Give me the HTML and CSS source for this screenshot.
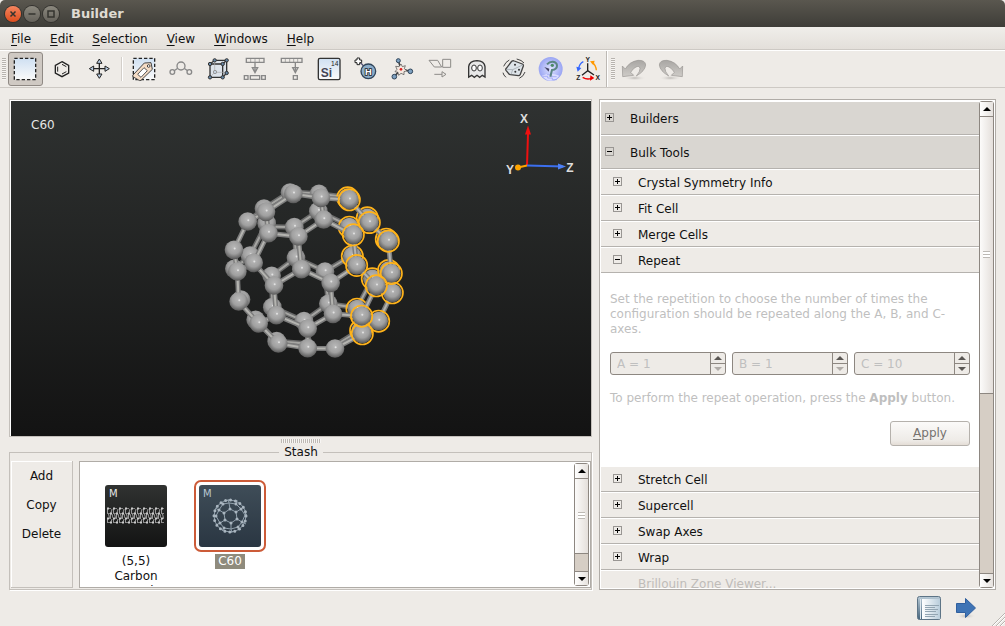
FILE: index.html
```html
<!DOCTYPE html>
<html lang="en">
  <head>
    <title>Builder</title>
    <meta charset="utf-8">
    <link rel="stylesheet" href="styles.css">
  </head>
  <body>
    <header class="titlebar">
      <button class="winbtn close" aria-label="Close"><svg viewBox="0 0 16 16"><path d="M5.500 5.500l5 5M10.500 5.500l-5 5"/></svg></button>
      <button class="winbtn" aria-label="Minimize"><svg viewBox="0 0 16 16"><path d="M4.500 8h7"/></svg></button>
      <button class="winbtn" aria-label="Maximize"><svg viewBox="0 0 16 16"><path d="M5 5h6v6h-6z"/></svg></button>
      <h1>Builder</h1>
    </header>

    <nav class="menubar">
      <button><u>F</u>ile</button>
      <button><u>E</u>dit</button>
      <button><u>S</u>election</button>
      <button><u>V</u>iew</button>
      <button><u>W</u>indows</button>
      <button><u>H</u>elp</button>
    </nav>

    <div class="toolbar">
      <span class="grip"></span>
      <button class="tool active" aria-label="Select">
        <svg viewBox="0 0 84 84"><rect x="10" y="10" width="64" height="64" fill="url(#sky)" stroke="#222" stroke-width="4" stroke-dasharray="10 6"/></svg>
      </button>
      <button class="tool" aria-label="Ring">
        <svg viewBox="0 0 84 84"><path d="M42 20l20 11v23l-20 11-20-11v-23z" fill="none" stroke="#222" stroke-width="4"/><path d="M29 35v15M42 28l13 7M42 57l13-7" stroke="#222" stroke-width="3"/></svg>
      </button>
      <button class="tool" aria-label="Move">
        <svg viewBox="0 0 84 84"><path d="M43 20v42M22 41h42" stroke="#222" stroke-width="4"/><path d="M43 12l8 13h-16zM43 70l8-13h-16zM13 41l13-8v16zM73 41l-13-8v16z" fill="#bcd0e6" stroke="#222" stroke-width="3"/></svg>
      </button>
      <span class="sep"></span>
      <button class="tool" aria-label="Tag selection">
        <svg viewBox="0 0 84 84"><rect x="10" y="10" width="64" height="64" fill="url(#sky)" stroke="#222" stroke-width="4" stroke-dasharray="10 6"/><path d="M9 60l34-36 20-1 4 20-34 33q-4 2-7-1l-16-9q-4-3-1-6z" fill="#f5dcc5" stroke="#444" stroke-width="3"/><path d="M23 58l19-20 10 9-19 20z" fill="#fff" stroke="#555" stroke-width="3"/><circle cx="56" cy="33" r="4" fill="#fff" stroke="#444" stroke-width="3"/></svg>
      </button>
      <button class="tool" aria-label="Bonds">
        <svg viewBox="0 0 84 84" fill="#eeebe7" stroke="#888" stroke-width="4"><path d="M16 51l26-18 25 18"/><circle cx="16" cy="51" r="7"/><circle cx="42" cy="33" r="12"/><circle cx="67" cy="51" r="7"/></svg>
      </button>
      <button class="tool" aria-label="Unit cell">
        <svg viewBox="0 0 84 84" stroke="#333" stroke-width="4"><path d="M18 27L32 16H68V54L56 67H18z" fill="#dde3ea"/><path d="M18 27H56V67M56 27L68 16" fill="none"/><path d="M32 20V52L18 67M32 52H68" fill="none" stroke="#aaa" stroke-width="2"/><g fill="#6688a8" stroke-width="3"><circle cx="18" cy="27" r="5"/><circle cx="56" cy="27" r="5"/><circle cx="56" cy="67" r="5"/><circle cx="18" cy="67" r="5"/><circle cx="32" cy="16" r="5"/><circle cx="68" cy="16" r="5"/><circle cx="68" cy="54" r="5"/></g><circle cx="33" cy="51" r="5" fill="#c5d2df" stroke="#999" stroke-width="3"/></svg>
      </button>
      <button class="tool" aria-label="Split">
        <svg viewBox="0 0 84 84" fill="none" stroke="#888" stroke-width="4"><path d="M16 10h53v12h-53zM42 22v25M34 38h16l-8 15zM10 62h11v11h-11zM28 62h28v11h-28zM62 62h11v11h-11z"/><path d="M29 10v12M42 10v12M55 10v12" stroke-width="2"/></svg>
      </button>
      <button class="tool" aria-label="Extract">
        <svg viewBox="0 0 84 84" fill="none" stroke="#888" stroke-width="4"><path d="M10 10h62v12h-62zM52 22v25M44 38h16l-8 15zM46 62h12v11h-12z"/><path d="M22 10v12M35 10v12M47 10v12M59 10v12" stroke-width="2"/></svg>
      </button>
      <button class="tool" aria-label="Element">
        <svg viewBox="0 0 84 84"><rect x="10" y="10" width="65" height="64" rx="5" fill="url(#sky)" stroke="#333" stroke-width="4"/><text x="17" y="65" class="si">Si</text><text x="48" y="32" class="num">14</text></svg>
      </button>
      <button class="tool" aria-label="Add hydrogen">
        <svg viewBox="0 0 84 84"><path d="M24 22l14 14" stroke="#557" stroke-width="4"/><path d="M15 9h8v6h6v8h-6v6h-8v-6h-6v-8h6z" fill="#fff" stroke="#222" stroke-width="3"/><circle cx="49" cy="49" r="22" fill="#8bacc9" stroke="#2f4459" stroke-width="4"/><text x="49" y="59" class="hyd">H</text></svg>
      </button>
      <button class="tool" aria-label="Adjust">
        <svg viewBox="0 0 84 84"><path d="M36 42L28 17M36 42L16 65M36 42L64 49" stroke="#444" stroke-width="5"/><path d="M36 27l4 8 9-3-3 9 8 6-9 3v9l-9-4-7 6-2-9-9-2 6-7-4-9 10 1z" fill="#f5e9e0" stroke="#444" stroke-width="2"/><circle cx="36" cy="43" r="4" fill="#d22"/><g fill="#7da0c0" stroke="#2f4459" stroke-width="3"><circle cx="28" cy="17" r="6"/><circle cx="16" cy="65" r="7"/><circle cx="64" cy="49" r="7"/></g></svg>
      </button>
      <button class="tool" aria-label="Transform cell">
        <svg viewBox="0 0 84 84" fill="none" stroke="#8d8b88" stroke-width="3"><path d="M9 16h26l12 20h-22zM50 13h24v24h-24zM25 58h23M48 50l12 8-12 8z"/></svg>
      </button>
      <button class="tool" aria-label="Ghost">
        <svg viewBox="0 0 84 84"><path d="M17 66V35q2-17 25-18 22 1 24 18v31l-8-5-8 6-8-6-8 6-8-6z" fill="#e8e8e8" stroke="#333" stroke-width="4"/><g fill="#fff" stroke="#333" stroke-width="3"><ellipse cx="33" cy="39" rx="7" ry="9"/><ellipse cx="51" cy="39" rx="7" ry="9"/></g></svg>
      </button>
      <button class="tool" aria-label="Randomize">
        <svg viewBox="0 0 84 84" fill="none" stroke="#444" stroke-width="3"><path d="M35 19q4-3 8-1l24 9q4 2 3 6l-9 25q-2 4-6 4l-24-3q-3 0-5-3l-8-10q-2-3 1-6z" fill="#dde3e8" stroke-width="4"/><path d="M38 44l-18-1M38 44l30-14M38 44l-5 15" stroke="#99a0a6" stroke-width="2"/><path d="M11 34q5-13 17-19M18 67q-8-7-9-14M50 12q15 3 22 12M75 51q-4 13-17 19"/><g fill="#333" stroke="none"><circle cx="46" cy="50" r="3"/><circle cx="57" cy="44" r="3"/><circle cx="45" cy="29" r="3"/></g></svg>
      </button>
      <button class="tool" aria-label="Render">
        <svg viewBox="0 0 84 84"><circle cx="41" cy="42" r="36" fill="url(#orb)"/><path d="M15 62q25-12 52 0-12 15-26 15t-26-15z" fill="#dcdeff"/><path d="M18 64h14v5h14v5h14M30 59h14v6h15" stroke="#8f99f2" stroke-width="2" fill="none"/><path d="M30 28q8-9 18-8 12 2 12 12 0 11-15 13l-5 20" fill="none" stroke="#5b8583" stroke-width="6"/><circle cx="46" cy="31" r="5" fill="#4c8a66"/><path d="M22 36l15 5-2 9z" fill="#446"/></svg>
      </button>
      <button class="tool" aria-label="Rotate axes">
        <svg viewBox="0 0 84 84" fill="none"><path d="M41 25v22M41 47L24 61M41 47l19 13" stroke="#222" stroke-width="4"/><path d="M28 20q-12 6-14 21" stroke="#36f" stroke-width="4"/><path d="M7 35l4 15 11-11z" fill="#36f"/><path d="M54 22q12 8 13 24" stroke="#f90" stroke-width="4"/><path d="M48 19l14-2-4 14z" fill="#f90"/><path d="M26 67q13 8 26 3" stroke="#e00" stroke-width="4"/><path d="M49 61l12 8-13 8z" fill="#e00"/><g class="axl"><text x="41" y="20">Y</text><text x="13" y="76">Z</text><text x="71" y="76">X</text></g></svg>
      </button>
      <span class="sep full"></span>
      <span class="grip"></span>
      <button class="tool" aria-label="Undo" disabled>
        <svg viewBox="0 0 84 84"><use href="#turn"/></svg>
      </button>
      <button class="tool" aria-label="Redo" disabled>
        <svg viewBox="0 0 84 84"><use href="#turn" transform="matrix(-1 0 0 1 84 0)"/></svg>
      </button>
    </div>

    <main class="main">
      <div class="left">
        <div class="viewport">
          <svg viewBox="0 0 580 334" role="img" aria-label="C60 molecule">
            <defs>
              <linearGradient id="sky" x2="0" y2="1"><stop offset="0" stop-color="#cfe0f2"/><stop offset="1" stop-color="#fafafa"/></linearGradient>
              <radialGradient id="orb"><stop offset="0" stop-color="#dfe3ff"/><stop offset="1" stop-color="#9aa5f3"/></radialGradient>
              <radialGradient id="ball" cx=".5" cy=".38" r=".62"><stop offset="0" stop-color="#b8b8b8"/><stop offset=".55" stop-color="#a0a0a0"/><stop offset="1" stop-color="#585858"/></radialGradient>
              <linearGradient id="turnfill" x2="0" y2="1"><stop offset="0" stop-color="#a8a6a3"/><stop offset="1" stop-color="#cfccc8"/></linearGradient>
              <radialGradient id="shade"><stop offset="0" stop-color="#bbb8b4"/><stop offset="1" stop-color="#eeebe7" stop-opacity="0"/></radialGradient>
              <g id="turn">
                <ellipse cx="44" cy="69" rx="34" ry="8" fill="url(#shade)"/>
                <path d="M7 33l9 9q12-22 38-26 22-1 23 14-2 18-28 33 12-14 11-23-2-9-12-4-9 4-16 16l9 9-33 4z" fill="url(#turnfill)" stroke="#999693" stroke-width="2"/>
              </g>
              <g id="atom">
                <circle r="28" fill="url(#ball)"/>
                <circle cx="2" cy="-4" r="3" fill="#e2e2e2"/>
              </g>
              <g id="sel">
                <circle r="32" fill="none" stroke="#ffb31a" stroke-width="5"/>
                <use href="#atom"/>
              </g>
              <path id="backbonds" d="M147 114L225 64L312 70L398 80M155 168L238 170L310 122L403 166L410 255M155 158L105 255L58 295M238 170L243 262L170 316L172 410L267 452L340 400L330 303L243 262M330 303L410 255M340 400L426 412L472 325L521 295M426 412L433 480L360 525M267 452L285 520L185 512L120 445M310 122L312 70M98 153L147 114"/>
              <path id="frontbonds" d="M98 153L153 124L235 70L318 82L403 88L463 156L520 212L529 309L532 367L491 452L442 490L360 534L278 533L190 519L131 459L71 393L67 303L57 238L98 153M153 124L160 188L116 277L67 303M160 188L250 198L326 147L318 82M326 147L415 193L463 156M415 193L425 285L484 346L529 309M425 285L347 337L259 296L250 198M259 296L177 345L116 277M177 345L184 434L131 459M184 434L278 474L354 430L347 337M354 430L440 437L484 346M440 437L442 490M278 474L278 533"/>
            </defs>

            <text x="20" y="27" class="label">C60</text>

            <!-- C60 cage, back half first -->
            <g transform="translate(204 69) scale(.3333)">
              <use href="#backbonds" class="bond dim"/>
              <use href="#backbonds" class="bond-hi dim"/>
              <use href="#atom" x="225" y="66"/><use href="#atom" x="312" y="70"/><use href="#atom" x="147" y="114"/>
              <use href="#atom" x="155" y="158"/><use href="#atom" x="238" y="170"/><use href="#atom" x="310" y="122"/>
              <use href="#atom" x="105" y="255"/><use href="#atom" x="58" y="295"/><use href="#atom" x="170" y="316"/>
              <use href="#atom" x="243" y="262"/><use href="#atom" x="330" y="303"/><use href="#atom" x="172" y="410"/>
              <use href="#atom" x="267" y="452"/><use href="#atom" x="340" y="400"/><use href="#atom" x="122" y="448"/>
              <use href="#atom" x="185" y="512"/><use href="#atom" x="78" y="387"/>
              <use href="#sel" x="398" y="82"/><use href="#sel" x="403" y="170"/><use href="#sel" x="457" y="142"/>
              <use href="#sel" x="514" y="206"/><use href="#sel" x="412" y="257"/><use href="#sel" x="472" y="325"/>
              <use href="#sel" x="521" y="300"/><use href="#sel" x="426" y="416"/><use href="#sel" x="437" y="480"/>
              <use href="#frontbonds" class="bond"/>
              <use href="#frontbonds" class="bond-hi"/>
              <use href="#atom" x="235" y="70"/><use href="#atom" x="318" y="82"/><use href="#atom" x="153" y="124"/>
              <use href="#atom" x="98" y="153"/><use href="#atom" x="160" y="188"/><use href="#atom" x="250" y="198"/>
              <use href="#atom" x="326" y="147"/><use href="#atom" x="57" y="238"/><use href="#atom" x="67" y="303"/>
              <use href="#atom" x="116" y="277"/><use href="#atom" x="177" y="345"/><use href="#atom" x="259" y="296"/>
              <use href="#atom" x="347" y="337"/><use href="#atom" x="71" y="393"/><use href="#atom" x="131" y="459"/>
              <use href="#atom" x="184" y="434"/><use href="#atom" x="278" y="533"/><use href="#atom" x="278" y="474"/>
              <use href="#atom" x="354" y="430"/><use href="#atom" x="190" y="519"/><use href="#atom" x="360" y="534"/>
              <use href="#sel" x="403" y="88"/><use href="#sel" x="463" y="156"/><use href="#sel" x="415" y="193"/>
              <use href="#sel" x="520" y="212"/><use href="#sel" x="425" y="285"/><use href="#sel" x="532" y="367"/>
              <use href="#sel" x="529" y="309"/><use href="#sel" x="484" y="346"/><use href="#sel" x="491" y="452"/>
              <use href="#sel" x="442" y="490"/><use href="#sel" x="440" y="437"/>
            </g>

            <!-- axes -->
            <g fill="none" stroke-width="2">
              <path d="M516 64l1-32" stroke="#f01010"/>
              <path d="M516 64l36 1" stroke="#3c6fee"/>
              <path d="M516 64l-9 2" stroke="#ffa500"/>
            </g>
            <path d="M517 24l3 9h-6z" fill="#f01010"/>
            <path d="M555 65l-8-3v6z" fill="#4c7ff4"/>
            <circle cx="507" cy="66" r="3" fill="#ffa500"/>
            <g class="axis"><text x="513" y="21">X</text><text x="499" y="72">Y</text><text x="559" y="70">Z</text></g>
          </svg>
        </div>
        <div class="splitter"></div>
        <fieldset class="stash">
          <legend>Stash</legend>
          <div class="stash-body">
            <div class="actions">
              <button>Add</button>
              <button>Copy</button>
              <button>Delete</button>
            </div>
            <div class="list">
              <div class="items">
                <figure class="item">
                  <div class="thumb">
                    <svg viewBox="0 0 62 62">
                      <defs>
                        <pattern id="tube" x="2" y="22" width="6" height="17" patternUnits="userSpaceOnUse">
                          <path d="M0 1.500h6M0 6.500h6M0 11.500h6M0 15.500h6" fill="none" stroke="#888" stroke-dasharray="4 2"/>
                          <path d="M.5 1.500v5M3.500 6.500v5M.5 11.500v4M5 2l-1 4M1.500 7l1 4M5 7l1 4M5 12l-1 3" fill="none" stroke="#999"/>
                          <path d="M0 1.500h2M3 6.500h2M0 11.500h2M3 15.500h2" stroke="#ccc" stroke-width="2"/>
                        </pattern>
                      </defs>
                      <rect x="2" y="22" width="57" height="17" fill="url(#tube)"/>
                      <text x="4" y="12">M</text>
                    </svg>
                  </div>
                  <figcaption>(5,5)<br>Carbon<br>Nanotube</figcaption>
                </figure>
                <figure class="item selected">
                  <div class="thumb">
                    <svg viewBox="0 0 62 62">
                      <g fill="none" stroke="#91a0ac">
                        <path d="M31 24l6 3 1 7-6 4-6-3-1-7zM31 24l-1-6M37 27l5-3M38 34l5 3M32 38v6M26 35l-5 3M25 28l-5-3"/>
                        <path d="M30 18l-6 1-4 6-3 6 4 7 4 5 7 1 7-2 4-5 3-7-4-6-5-5z"/>
                        <path d="M30 18l-1-4M24 19l-3-2M20 25l-4-2M17 31h-3M21 38l-4 2M25 43l-2 3M32 44l1 4M39 42l3 3M43 37l4 2M46 30l2-1M42 24l3-3M37 19l1-4"/>
                        <circle cx="31" cy="31" r="16"/>
                      </g>
                      <g fill="none" stroke="#a9b5bf" stroke-width="3" stroke-linecap="round">
                        <circle cx="31" cy="31" r="16" stroke-dasharray="0 5.030"/>
                        <path d="M31 24h0M37 27h0M38 34h0M32 38h0M26 35h0M25 28h0M24 19h0M20 25h0M17 31h0M21 38h0M25 43h0M39 42h0M43 37h0M42 24h0M37 19h0"/>
                      </g>
                      <text x="4" y="12">M</text>
                    </svg>
                  </div>
                  <figcaption><span>C60</span></figcaption>
                </figure>
              </div>
              <div class="scroll">
                <button class="up" aria-label="Scroll up"></button>
                <span class="knob short"></span>
                <span class="trough short"></span>
                <button class="down" aria-label="Scroll down"></button>
              </div>
            </div>
          </div>
        </fieldset>
      </div>

      <aside class="panel">
        <div class="tree">
          <button class="row top"><i class="box plus"></i>Builders</button>
          <button class="row top"><i class="box"></i>Bulk Tools</button>
          <button class="row"><i class="box plus"></i>Crystal Symmetry Info</button>
          <button class="row"><i class="box plus"></i>Fit Cell</button>
          <button class="row"><i class="box plus"></i>Merge Cells</button>
          <button class="row"><i class="box"></i>Repeat</button>
          <form class="repeat">
            <p>Set the repetition to choose the number of times the configuration should be repeated along the A, B, and C-axes.</p>
            <div class="spins">
              <div class="spin">
                <input type="text" value="A = 1" aria-label="A" disabled>
                <div class="steps"><button type="button" class="inc" aria-label="Increase A"></button><button type="button" class="dec off" aria-label="Decrease A"></button></div>
              </div>
              <div class="spin">
                <input type="text" value="B = 1" aria-label="B" disabled>
                <div class="steps"><button type="button" class="inc" aria-label="Increase B"></button><button type="button" class="dec off" aria-label="Decrease B"></button></div>
              </div>
              <div class="spin">
                <input type="text" value="C = 10" aria-label="C" disabled>
                <div class="steps"><button type="button" class="inc" aria-label="Increase C"></button><button type="button" class="dec" aria-label="Decrease C"></button></div>
              </div>
            </div>
            <p>To perform the repeat operation, press the <b>Apply</b> button.</p>
            <button type="button" class="apply"><u>A</u>pply</button>
          </form>
          <button class="row"><i class="box plus"></i>Stretch Cell</button>
          <button class="row"><i class="box plus"></i>Supercell</button>
          <button class="row"><i class="box plus"></i>Swap Axes</button>
          <button class="row"><i class="box plus"></i>Wrap</button>
          <button class="row" disabled><i class="box none"></i>Brillouin Zone Viewer...</button>
        </div>
        <div class="scroll">
          <button class="up" aria-label="Scroll up"></button>
          <span class="knob"></span>
          <span class="trough"></span>
          <button class="down" aria-label="Scroll down"></button>
        </div>
      </aside>
    </main>

    <footer class="statusbar">
      <button aria-label="Log">
        <svg viewBox="0 0 24 24"><defs><linearGradient id="page" x2="0" y2="1"><stop offset="0" stop-color="#b9cad6"/><stop offset="1" stop-color="#45647c"/></linearGradient><linearGradient id="sheet"><stop offset="0" stop-color="#fff"/><stop offset="1" stop-color="#b9cddb"/></linearGradient></defs><rect x=".5" y=".5" width="23" height="23" rx="2" fill="url(#page)" stroke="#5d7486"/><path d="M3.500 3v20" stroke="#dde6ec"/><path d="M5 3h18v20h-18z" fill="url(#sheet)"/><path d="M8 9.500h14M8 11.500h10M8 13.500h13M8 15.500h11M8 18.500h13M8 20.500h10" stroke="#93a5b2"/></svg>
      </button>
      <button aria-label="Next">
        <svg viewBox="0 0 24 24"><ellipse cx="12" cy="20" rx="10" ry="3" fill="url(#shade)"/><path d="M2.500 7.500h9v-5l10 9.500-10 9.500v-5h-9z" fill="#3f74b5" stroke="#2f5f9e"/></svg>
      </button>
      <svg class="corner" viewBox="0 0 14 14"><path d="M1 14L14 1M5 14l9-9M9 14l5-5" stroke="#b8b4af"/><path d="M2 14L14 2M6 14l8-8M10 14l4-4" stroke="#fff"/></svg>
    </footer>
  </body>
</html>
```
FILE: styles.css
```css
* {
  box-sizing: border-box;
}
body {
  margin: 0;
  height: 100vh;
  display: flex;
  flex-direction: column;
  overflow: hidden;
  background: #eeebe7;
  color: #111;
  font: 12px/15px "DejaVu Sans", sans-serif;
}
button, input {
  font: inherit;
  color: inherit;
  margin: 0;
  padding: 0;
  border: 0;
  background: none;
}
svg {
  display: block;
}
u {
  text-underline-offset: 2px;
}

/* window title and menus */
.titlebar {
  height: 27px;
  flex: none;
  display: flex;
  align-items: center;
  gap: 3px;
  padding-left: 5px;
  background: linear-gradient(#5a574f, #3e3d38);
  border-radius: 5px 5px 0 0;
}
.titlebar h1 {
  margin: 0 0 0 9px;
  font-size: 13px;
  color: #dfdbd2;
}
.winbtn {
  width: 16px;
  height: 16px;
  border-radius: 50%;
  background: linear-gradient(#8b887e, #65625b);
  box-shadow: 0 0 0 1px #33322e;
}
.winbtn.close {
  background: linear-gradient(#f5855f, #df4d1d);
}
.winbtn path {
  fill: none;
  stroke: #35342f;
  stroke-width: 1.5;
}
.menubar {
  height: 23px;
  flex: none;
  display: flex;
  align-items: center;
  background: linear-gradient(#f0eeea, #e3dfda);
  border-bottom: 1px solid #cdc9c4;
  padding: 3px 0 0 1px;
}
.menubar button {
  padding: 0 9px 0 10px;
}

/* toolbar */
.toolbar {
  height: 38px;
  flex: none;
  display: flex;
  align-items: center;
  gap: 2px;
  padding-left: 2px;
  border-top: 1px solid #fff;
  border-bottom: 1px solid #cdc9c4;
}
.grip {
  width: 4px;
  height: 22px;
  background: repeating-linear-gradient(#b7b3ae 0 1px, #f7f5f3 1px 2px);
}
.tool {
  width: 35px;
  height: 34px;
  padding: 3px;
  border: 1px solid transparent;
  border-radius: 3px;
}
.tool svg {
  width: 28px;
  height: 28px;
  margin: -1px;
}
.tool.active {
  background: #cfc9c3;
  border-color: #8f8984;
}
.sep {
  width: 2px;
  height: 24px;
  margin: 0 2px;
  border-left: 1px solid #d3cfca;
  border-right: 1px solid #fff;
}
.sep.full {
  height: 36px;
  margin: 0 1px 0 -2px;
  border-left-color: #bdb9b4;
}
.tool text {
  font-family: "Liberation Sans", sans-serif;
  font-weight: bold;
  fill: #222;
}
.tool .si {
  font-size: 36px;
  fill: #445;
}
.tool .num {
  font-size: 20px;
  font-weight: normal;
}
.tool .hyd {
  font-size: 28px;
  fill: #fff;
  stroke: #222;
  stroke-width: 5;
  paint-order: stroke;
  text-anchor: middle;
}
.tool .axl {
  font-size: 20px;
  text-anchor: middle;
}

/* work area */
.main {
  flex: 1;
  min-height: 0;
  display: grid;
  grid-template-columns: 583fr 397fr;
  grid-template-rows: 100%;
  gap: 7px;
  padding: 11px 9px 0;
}
.left {
  display: flex;
  flex-direction: column;
  min-width: 0;
}
.viewport {
  flex: 1;
  min-height: 0;
  padding: 1px 0 0 1px;
  border: 1px solid #c4c0bb;
  background: #fff;
}
.viewport svg {
  width: 100%;
  height: 100%;
  background: linear-gradient(#2f3231, #131313);
}
.label {
  fill: #e6e6e6;
}
.axis {
  font: bold 12px "Liberation Sans", sans-serif;
  fill: #ddd;
  text-anchor: middle;
}
.bond {
  fill: none;
  stroke: #7d7d7d;
  stroke-width: 15;
}
.bond-hi {
  fill: none;
  stroke: #b4b4b0;
  stroke-width: 6;
}
.dim {
  opacity: .8;
}
.splitter {
  height: 7px;
  flex: none;
  width: 40px;
  margin: 0 auto;
  border-top: 2px solid #eeebe7;
  border-bottom: 1px solid #eeebe7;
  background: repeating-linear-gradient(90deg, #bdb9b4 0 1px, #f7f5f3 1px 2px);
}

/* stash */
.stash {
  flex: none;
  margin: 0;
  min-width: 0;
  padding: 1px 0 1px 1px;
  border: 1px solid #c4c0bb;
  box-shadow: 1px 1px #fff;
}
.stash legend {
  margin: 0 auto;
  padding: 1px 5px 0;
}
.stash-body {
  height: 127px;
  display: flex;
  gap: 6px;
}
.actions {
  width: 62px;
  display: flex;
  flex-direction: column;
  align-items: center;
  gap: 14px;
  padding-top: 8px;
  border: 1px solid #c4c0bb;
  border-width: 0 1px 1px 0;
  box-shadow: inset 1px 1px #fff;
}
.list {
  flex: 1;
  min-width: 0;
  display: flex;
  padding: 1px;
  background: #fff;
  border: 1px solid #b0aca7;
}
.items {
  flex: 1;
  display: flex;
  gap: 22px;
  padding: 17px 0 0 19px;
  overflow: hidden;
}
.item {
  width: 72px;
  margin: 0;
  text-align: center;
}
.thumb {
  padding: 3px;
  border: 2px solid transparent;
  border-radius: 7px;
}
.thumb svg {
  width: 62px;
  height: 62px;
  border-radius: 3px;
  background: linear-gradient(#303231, #131313);
}
.thumb text {
  font-size: 10px;
  fill: #e6e6e6;
}
.selected .thumb {
  border-color: #cc5b38;
}
.selected svg {
  background: linear-gradient(#3f4d58, #2a3642);
}
.selected text {
  fill: #b9c6d0;
}
.item figcaption {
  margin-top: 2px;
}
.selected span {
  display: inline-block;
  padding: 0 3px;
  background: #8f8b7d;
  color: #fff;
}

/* scroll bars */
.scroll {
  width: 15px;
  flex: none;
  display: flex;
  flex-direction: column;
  border: 1px solid #8d8781;
  border-radius: 3px;
  background: #d6cec5;
}
.scroll button {
  height: 14px;
  flex: none;
  display: flex;
  align-items: center;
  justify-content: center;
  background: linear-gradient(90deg, #fff, #e6e2de);
}
.up::before, .inc::before {
  content: "";
  border: 4px solid transparent;
  border-top: 0;
  border-bottom-color: #000;
}
.down::before, .dec::before {
  content: "";
  border: 4px solid transparent;
  border-bottom: 0;
  border-top-color: #000;
}
.knob {
  flex: 277;
  border: 1px solid #8d8781;
  border-width: 1px 0;
  background:
    repeating-linear-gradient(#bdb9b4 0 1px, #fff 1px 3px) center / 7px 7px no-repeat,
    linear-gradient(90deg, #fcfbfa, #e4dfdb);
}
.trough {
  flex: 180;
}
.knob.short {
  flex: 78;
}
.trough.short {
  flex: 18;
}
.scroll .down {
  border-top: 1px solid #8d8781;
}

/* tool panel */
.panel {
  min-width: 0;
  display: flex;
  padding: 1px;
  background: #fff;
  border: 1px solid #b0aca7;
}
.tree {
  flex: 1;
  min-width: 0;
  overflow: hidden;
}
.row {
  width: 100%;
  height: 26px;
  display: flex;
  align-items: center;
  gap: 16px;
  padding: 2px 0 0 12px;
  text-align: left;
  background: #eeebe7;
  border-top: 1px solid #fff;
  border-bottom: 1px solid #b5b2ae;
}
.row.top {
  height: 34px;
  padding-left: 4px;
  background: #d9d6d1;
}
.row:disabled {
  color: #bfbcb9;
}
.box {
  width: 9px;
  height: 9px;
  margin-bottom: 4px;
  border: 1px solid #999693;
  background: linear-gradient(#000, #000) center / 5px 1px no-repeat;
}
.box.plus {
  background:
    linear-gradient(#000, #000) center / 5px 1px no-repeat,
    linear-gradient(#000, #000) center / 1px 5px no-repeat;
}
.box.none {
  visibility: hidden;
}
.repeat {
  display: flex;
  flex-direction: column;
  gap: 15px;
  padding: 18px 9px 20px;
  color: #bfbfbf;
}
.repeat p {
  margin: 0;
  padding-top: 1px;
}
.spins {
  display: flex;
  gap: 6px;
}
.spin {
  flex: 1;
  min-width: 0;
  height: 23px;
  display: flex;
  overflow: hidden;
  border: 1px solid #8d8781;
  border-radius: 3px;
  background: #eeebe7;
}
.spin input {
  flex: 1;
  min-width: 0;
  padding: 2px 0 0 6px;
}
.steps {
  width: 15px;
  display: flex;
  flex-direction: column;
  border-left: 1px solid #8d8781;
}
.steps button {
  flex: 1;
  display: flex;
  align-items: center;
  justify-content: center;
}
.steps .dec {
  border-top: 1px solid #8d8781;
}
.inc::before {
  border-bottom-color: #5a5754;
}
.dec::before {
  border-top-color: #5a5754;
}
.off::before {
  border-top-color: #b0aca8;
}
.apply {
  width: 80px;
  height: 25px;
  align-self: flex-end;
  color: #75726f;
  border: 1px solid #b5b1ac;
  border-radius: 3px;
  background: linear-gradient(#fbfaf9, #eeebe7 80%, #e4ddd6);
}

/* status bar */
.statusbar {
  height: 36px;
  flex: none;
  display: flex;
  align-items: center;
  justify-content: flex-end;
  gap: 13px;
}
.statusbar button svg {
  width: 24px;
  height: 24px;
}
.corner {
  width: 14px;
  height: 14px;
  align-self: flex-end;
}
```
